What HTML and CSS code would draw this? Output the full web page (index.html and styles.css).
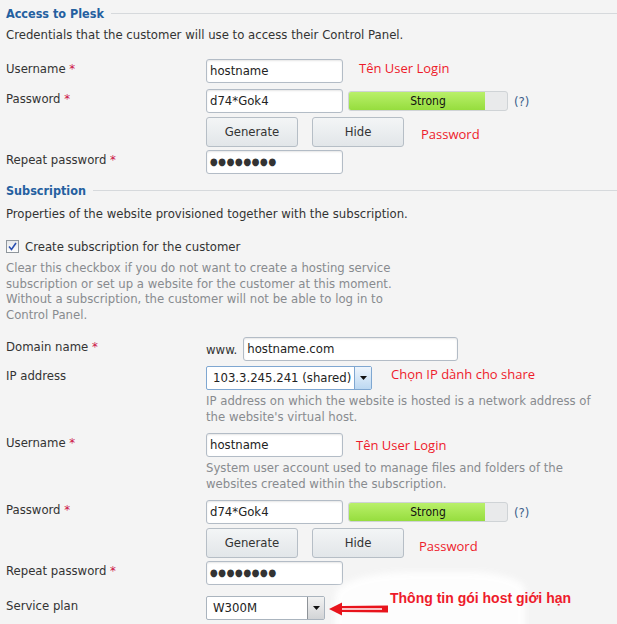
FILE: index.html
```html
<!DOCTYPE html>
<html>
<head>
<meta charset="utf-8">
<link rel="stylesheet" href="styles.css">
</head>
<body>
<div class="page">
  <div class="section-title"><span>Access to Plesk</span></div>
  <p class="desc">Credentials that the customer will use to access their Control Panel.</p>

  <div class="row mt16">
    <div class="label">Username <span class="req">*</span></div>
    <div class="field">
      <div class="input w137">hostname</div>
      <span class="note note-user1">Tên User Login</span>
    </div>
  </div>

  <div class="row mt6">
    <div class="label">Password <span class="req">*</span></div>
    <div class="field">
      <div class="input w137">d74*Gok4</div>
      <div class="strength"><div class="strength-fill"></div><span class="strength-text">Strong</span></div>
      <span class="help">(?)</span>
    </div>
  </div>

  <div class="row mt4">
    <div class="label"></div>
    <div class="field">
      <div class="btn">Generate</div>
      <div class="btn btn-hide">Hide</div>
      <span class="note note-pass">Password</span>
    </div>
  </div>

  <div class="row mt3">
    <div class="label">Repeat password <span class="req">*</span></div>
    <div class="field">
      <div class="input w137 dots">●●●●●●●●</div>
    </div>
  </div>

  <div class="section-title mt7"><span>Subscription</span></div>
  <p class="desc desc2">Properties of the website provisioned together with the subscription.</p>

  <div class="check-row">
    <span class="checkbox"><svg width="9" height="9" viewBox="0 0 9 9"><path d="M1 4.5 L3.5 7.5 L8 1" fill="none" stroke="#2a4fb0" stroke-width="1.6"/></svg></span>
    <span class="check-label">Create subscription for the customer</span>
  </div>
  <p class="hint hint-check">Clear this checkbox if you do not want to create a hosting service<br>subscription or set up a website for the customer at this moment.<br>Without a subscription, the customer will not be able to log in to<br>Control Panel.</p>

  <div class="row mt15">
    <div class="label">Domain name <span class="req">*</span></div>
    <div class="field">
      <span class="www">www.</span>
      <div class="input w214">hostname.com</div>
    </div>
  </div>

  <div class="row mt5">
    <div class="label">IP address</div>
    <div class="field">
      <div class="select select-ip w165"><span class="sel-text">103.3.245.241 (shared)</span><span class="sel-btn"><svg width="7" height="4" viewBox="0 0 7 4"><path d="M0 0 H7 L3.5 4 Z" fill="#111"/></svg></span></div>
      <span class="note note-ip">Chọn IP dành cho share</span>
    </div>
  </div>
  <div class="row">
    <div class="label"></div>
    <p class="hint hint-field">IP address on which the website is hosted is a network address of<br>the website's virtual host.</p>
  </div>

  <div class="row mt8">
    <div class="label">Username <span class="req">*</span></div>
    <div class="field">
      <div class="input w137">hostname</div>
      <span class="note note-user2">Tên User Login</span>
    </div>
  </div>
  <div class="row">
    <div class="label"></div>
    <p class="hint hint-field">System user account used to manage files and folders of the<br>websites created within the subscription.</p>
  </div>

  <div class="row mt8">
    <div class="label">Password <span class="req">*</span></div>
    <div class="field">
      <div class="input w137">d74*Gok4</div>
      <div class="strength"><div class="strength-fill"></div><span class="strength-text">Strong</span></div>
      <span class="help">(?)</span>
    </div>
  </div>

  <div class="row mt4">
    <div class="label"></div>
    <div class="field">
      <div class="btn">Generate</div>
      <div class="btn btn-hide">Hide</div>
      <span class="note note-pass2">Password</span>
    </div>
  </div>

  <div class="row mt3">
    <div class="label">Repeat password <span class="req">*</span></div>
    <div class="field">
      <div class="input w137 dots">●●●●●●●●</div>
    </div>
  </div>

  <div class="row mt11 top-layer">
    <div class="label">Service plan</div>
    <div class="field">
      <div class="select select-plan w118"><span class="sel-text">W300M</span><span class="sel-btn"><svg width="7" height="4" viewBox="0 0 7 4"><path d="M0 0 H7 L3.5 4 Z" fill="#111"/></svg></span></div>
      <svg class="arrow" width="62" height="16" viewBox="0 0 62 16"><path d="M1 8 L14 1.5 L14 5 L60 4.5 L60 11.5 L14 11 L14 14.5 Z" fill="#e8141c"/><path d="M14 8 H54" stroke="#fff" stroke-width="1.3"/></svg>
      <span class="note-plan">Thông tin gói host giới hạn</span>
    </div>
  </div>

  <div class="smudge"></div>
</div>
</body>
</html>
```

FILE: styles.css
```css
html, body {
  margin: 0;
  padding: 0;
}
body {
  background: #f4f4f4;
  font-family: "DejaVu Sans Condensed", "Liberation Sans", sans-serif;
  font-size: 13px;
  color: #333;
  width: 617px;
  height: 624px;
  overflow: hidden;
}
.page {
  position: relative;
  padding: 4px 0 0 6px;
}
.section-title {
  display: flex;
  align-items: center;
  height: 18px;
  font-size: 12.5px;
  font-weight: bold;
  color: #2460a0;
}
.section-title::after {
  content: "";
  flex: 1;
  height: 1px;
  background: #d6d9dc;
  margin-left: 7px;
}
.desc {
  margin: 5px 0 0;
  line-height: 16px;
  height: 16px;
  white-space: nowrap;
}
.desc2 { margin-top: 7px; }
.mt3 { margin-top: 3px; }
.mt4 { margin-top: 4px; }
.mt5 { margin-top: 5px; }
.mt6 { margin-top: 6px; }
.mt7 { margin-top: 7px; }
.mt8 { margin-top: 8px; }
.mt11 { margin-top: 11px; }
.mt15 { margin-top: 15px; }
.mt16 { margin-top: 16px; }

.row {
  display: grid;
  grid-template-columns: 200px auto;
  align-items: start;
}
.top-layer {
  position: relative;
  z-index: 2;
}
.label {
  padding-top: 2px;
  line-height: 16px;
  white-space: nowrap;
}
.req { color: #cc1144; }
.field {
  display: flex;
  align-items: center;
}
.input {
  box-sizing: border-box;
  height: 24px;
  line-height: 22px;
  padding: 0 3px;
  background: #fff;
  border: 1px solid #b3bcc6;
  border-radius: 3px;
  box-shadow: inset 0 1px 2px rgba(0,0,0,0.10);
  font-size: 13px;
  color: #222;
  white-space: nowrap;
}
.w137 { width: 137px; }
.w214 { width: 215px; }
.w165 { width: 166px; }
.w118 { width: 119px; }
.dots {
  font-size: 10px;
  letter-spacing: 0.5px;
  color: #333;
}
.strength {
  position: relative;
  box-sizing: border-box;
  width: 160px;
  height: 20px;
  margin-left: 5px;
  border: 1px solid #cfd3d6;
  border-radius: 3px;
  background: #e9eaeb;
  overflow: hidden;
}
.strength-fill {
  width: 136px;
  height: 100%;
  background: linear-gradient(#b9f06a, #96dd3e);
}
.strength-text {
  position: absolute;
  inset: 0;
  text-align: center;
  line-height: 18px;
  font-size: 12px;
  color: #111;
}
.help {
  margin-left: 6px;
  color: #3b5f8a;
  font-size: 13px;
}
.btn {
  box-sizing: border-box;
  width: 92px;
  height: 30px;
  line-height: 28px;
  text-align: center;
  border: 1px solid #b6bec6;
  border-radius: 3px;
  background: linear-gradient(#f3f5f6, #e2e6e9);
  color: #333;
  font-size: 13px;
}
.btn-hide { margin-left: 14px; }
.note {
  font-family: "Open Sans", "Liberation Sans", sans-serif;
  font-size: 13px;
  color: #ee1b2b;
  white-space: nowrap;
}
.note-user1 { margin-left: 16px; position: relative; top: -3px; }
.note-user2 { margin-left: 13px; }
.note-pass { margin-left: 17px; position: relative; top: 2px; }
.note-pass2 { margin-left: 15px; position: relative; top: 3px; }
.note-ip { margin-left: 19px; position: relative; top: -4px; }

.check-row {
  display: flex;
  align-items: center;
  margin-top: 16px;
  height: 16px;
}
.checkbox {
  box-sizing: border-box;
  width: 13px;
  height: 13px;
  border: 1px solid #8f969c;
  background: linear-gradient(#e6e8ea, #fdfdfd);
  display: flex;
  align-items: center;
  justify-content: center;
}
.check-label {
  margin-left: 6px;
  font-size: 13px;
  color: #333;
}
.hint {
  margin: 0;
  color: #888b8f;
  white-space: nowrap;
}
.hint-check {
  margin-top: 6px;
  line-height: 15.5px;
}
.hint-field {
  margin-top: 3px;
  line-height: 16px;
}
.www {
  margin-right: 6px;
  font-size: 13px;
}
.select {
  box-sizing: border-box;
  height: 24px;
  display: flex;
  align-items: stretch;
  background: #fff;
  border: 1px solid #aab4be;
  border-radius: 2px;
  font-size: 13px;
  color: #222;
}
.select-ip { border-color: #7fa7d1; }
.sel-text {
  flex: 1;
  padding-left: 6px;
  line-height: 22px;
  white-space: nowrap;
}
.sel-btn {
  width: 16px;
  display: flex;
  align-items: center;
  justify-content: center;
  border-left: 1px solid #9fb7cf;
}
.select-ip .sel-btn {
  background: linear-gradient(#eef5fc, #bcd8f1);
  border-left-color: #7fa7d1;
}
.select-plan .sel-btn {
  background: linear-gradient(#f2f2f2, #d2d4d6);
  border-left: 1px solid #8e9398;
}
.arrow {
  margin-left: 3px;
  position: relative;
  top: 1px;
}
.note-plan {
  font-family: "Liberation Sans", sans-serif;
  font-weight: bold;
  font-size: 14px;
  color: #ee1b2b;
  white-space: nowrap;
  margin-left: 0;
  position: relative;
  top: -10px;
}
.smudge {
  position: absolute;
  left: 335px;
  top: 572px;
  width: 190px;
  height: 60px;
  background: #fff;
  border-radius: 40% 30% 0 0;
  filter: blur(3px);
  opacity: 0.9;
  z-index: 1;
}
```
